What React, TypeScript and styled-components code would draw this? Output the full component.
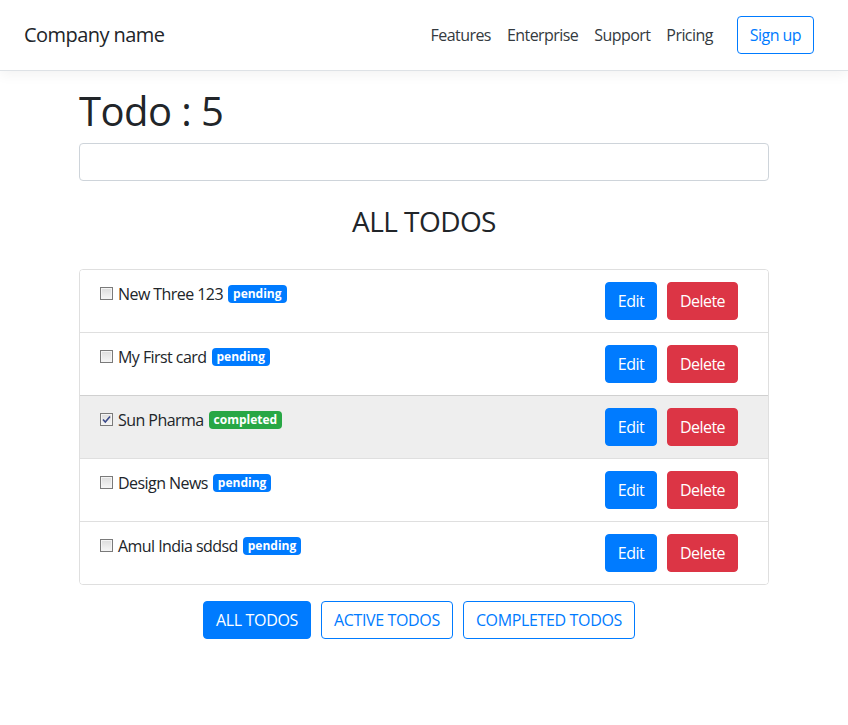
import React, { useState } from "react";
import styled, { createGlobalStyle } from "styled-components";

const GlobalStyle = createGlobalStyle`
  html, body { margin: 0; padding: 0; background: #fff; }
  body {
    font-family: "Open Sans", "Noto Sans", sans-serif;
    font-size: 16px;
    line-height: 1.5;
    color: #212529;
    letter-spacing: -0.035em;
  }
  * { box-sizing: border-box; }
`;

const Header = styled.header`
  display: flex;
  align-items: center;
  padding: 16px 24px;
  margin-bottom: 16px;
  background: #fff;
  border-bottom: 1px solid #dee2e6;
  box-shadow: 0 4px 12px rgba(0, 0, 0, 0.05);
`;

const Brand = styled.h5`
  margin: 0 auto 0 0;
  font-size: 20px;
  font-weight: 400;
  line-height: 1.2;
`;

const Nav = styled.nav`
  display: block;
  margin-right: 16px;
  line-height: 24px;
`;

const NavLink = styled.a`
  display: inline;
  padding: 8px;
  color: #343a40;
  text-decoration: none;
`;

const Btn = styled.button<{ $variant: "primary" | "danger" | "outline" }>`
  display: inline-block;
  margin: 0 10px 0 0;
  font-family: inherit;
  letter-spacing: inherit;
  font-size: 16px;
  line-height: 24px;
  padding: 6px 12px;
  border-radius: 4px;
  cursor: pointer;
  border: 1px solid
    ${(p) => (p.$variant === "danger" ? "#dc3545" : "#007bff")};
  background: ${(p) =>
    p.$variant === "primary" ? "#007bff" : p.$variant === "danger" ? "#dc3545" : "#fff"};
  color: ${(p) => (p.$variant === "outline" ? "#007bff" : "#fff")};
`;

const Container = styled.main`
  width: 720px;
  margin: 0 auto;
  padding: 0 15px;
`;

const Title = styled.h1`
  margin: 0 0 8px;
  font-size: 40px;
  font-weight: 400;
  line-height: 1.2;
`;

const Input = styled.input`
  display: block;
  width: 100%;
  height: 38px;
  padding: 6px 12px;
  font-size: 16px;
  border: 1px solid #ced4da;
  border-radius: 4px;
  background: #fff;
`;

const Heading = styled.h3`
  margin: 24px 0 30px;
  text-align: center;
  font-size: 28px;
  font-weight: 400;
  line-height: 1.2;
`;

const List = styled.ul`
  list-style: none;
  margin: 0 0 16px;
  padding: 0;
  border: 1px solid rgba(0, 0, 0, 0.125);
  border-radius: 4px;
  overflow: hidden;
`;

const Item = styled.li<{ $done: boolean }>`
  display: flex;
  justify-content: space-between;
  align-items: flex-start;
  padding: 12px 20px;
  background: ${(p) => (p.$done ? "#eeeeee" : "#fff")};
  & + & {
    border-top: 1px solid rgba(0, 0, 0, 0.125);
  }
`;

const ItemLabel = styled.label`
  display: flex;
  align-items: center;
  line-height: 24px;
`;

const Box = styled.span`
  display: inline-flex;
  align-items: center;
  justify-content: center;
  width: 13px;
  height: 13px;
  margin-right: 5px;
  border: 1px solid #7a7a7a;
  background: linear-gradient(#dcdcdc, #f6f6f6);
  box-shadow: inset 0 0 0 1px #f4f4f4;
`;

const Badge = styled.span<{ $done: boolean }>`
  display: inline-block;
  margin-left: 5px;
  padding: 3px 5px;
  font-size: 12px;
  font-weight: 700;
  line-height: 1;
  letter-spacing: 0;
  color: #fff;
  border-radius: 4px;
  background: ${(p) => (p.$done ? "#28a745" : "#007bff")};
`;

const Actions = styled.div`
  display: flex;
`;

const Filters = styled.div`
  display: flex;
  justify-content: center;
`;

const FilterBtn = styled(Btn)`
  text-transform: uppercase;
  letter-spacing: -0.022em;
`;

type Todo = { title: string; done: boolean };

const todos: Todo[] = [
  { title: "New Three 123", done: false },
  { title: "My First card", done: false },
  { title: "Sun Pharma", done: true },
  { title: "Design News", done: false },
  { title: "Amul India sddsd", done: false },
];

const Check = () => (
  <svg width="9" height="9" viewBox="0 0 9 9">
    <path d="M1 4.5 L3.3 7 L8 1.5" fill="none" stroke="#3b4a8a" strokeWidth="1.6" />
  </svg>
);

export default function App() {
  const [filter] = useState("all");
  return (
    <>
      <GlobalStyle />
      <Header>
        <Brand>Company name</Brand>
        <Nav>
          <NavLink href="#">Features</NavLink>
          <NavLink href="#">Enterprise</NavLink>
          <NavLink href="#">Support</NavLink>
          <NavLink href="#">Pricing</NavLink>
        </Nav>
        <Btn $variant="outline">Sign up</Btn>
      </Header>
      <Container>
        <Title>Todo : {todos.length}</Title>
        <Input type="text" />
        <Heading>ALL TODOS</Heading>
        <List>
          {todos.map((t) => (
            <Item key={t.title} $done={t.done}>
              <ItemLabel>
                <Box>{t.done && <Check />}</Box>
                {t.title}
                <Badge $done={t.done}>{t.done ? "completed" : "pending"}</Badge>
              </ItemLabel>
              <Actions>
                <Btn $variant="primary">Edit</Btn>
                <Btn $variant="danger">Delete</Btn>
              </Actions>
            </Item>
          ))}
        </List>
        <Filters>
          <FilterBtn $variant={filter === "all" ? "primary" : "outline"}>All Todos</FilterBtn>
          <FilterBtn $variant="outline">Active Todos</FilterBtn>
          <FilterBtn $variant="outline">Completed Todos</FilterBtn>
        </Filters>
      </Container>
    </>
  );
}
